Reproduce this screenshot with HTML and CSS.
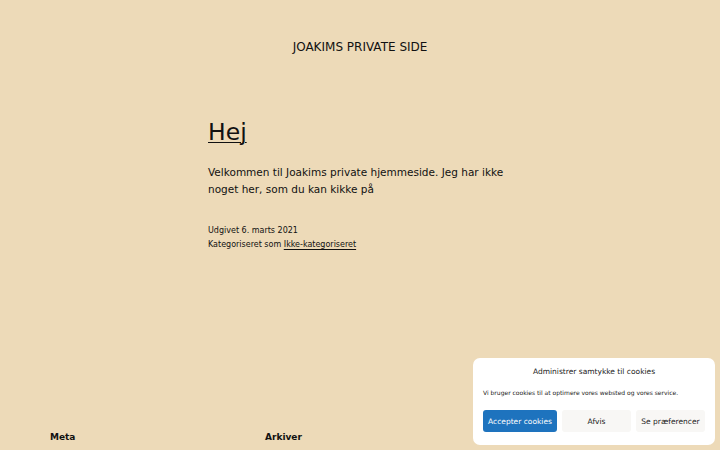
FILE: index.html
```html
<!DOCTYPE html>
<html lang="da">
<head>
<meta charset="utf-8">
<title>Joakims private side</title>
<link rel="stylesheet" href="styles.css">
</head>
<body>
<header class="site-header">
  <p class="site-title">JOAKIMS PRIVATE SIDE</p>
</header>
<main class="content">
  <article class="post">
    <h1 class="entry-title"><a href="#">Hej</a></h1>
    <p class="entry-text">Velkommen til Joakims private hjemmeside. Jeg har ikke noget her, som du kan kikke på</p>
    <footer class="entry-meta">
      <div>Udgivet 6. marts 2021</div>
      <div>Kategoriseret som <a href="#">Ikke-kategoriseret</a></div>
    </footer>
  </article>
</main>
<section class="widgets">
  <div class="widget"><h2>Meta</h2></div>
  <div class="widget"><h2>Arkiver</h2></div>
</section>
<div class="cookie-banner">
  <div class="cookie-title">Administrer samtykke til cookies</div>
  <div class="cookie-text">Vi bruger cookies til at optimere vores websted og vores service.</div>
  <div class="cookie-buttons">
    <button class="btn btn-accept">Accepter cookies</button>
    <button class="btn btn-plain">Afvis</button>
    <button class="btn btn-plain">Se præferencer</button>
  </div>
</div>
</body>
</html>
```
FILE: styles.css
```css
html, body {
  margin: 0;
  padding: 0;
}
body {
  background: #eddab8;
  color: #28303d;
  font-family: "DejaVu Sans", sans-serif;
  height: 450px;
  overflow: hidden;
  position: relative;
}
a {
  color: inherit;
}
.site-header {
  padding-top: 38px;
  text-align: center;
}
.site-title {
  margin: 0;
  font-size: 12px;
  line-height: 18px;
  color: #111;
}
.content {
  width: 304px;
  margin: 0 auto;
  padding-top: 60px;
}
.entry-title {
  margin: 0;
  font-size: 23.5px;
  font-weight: 400;
  line-height: 32px;
  color: #111;
}
.entry-title a {
  text-decoration-thickness: 1px;
  text-underline-offset: 2px;
}
.entry-text {
  margin: 16px 0 0;
  font-size: 10.5px;
  line-height: 17px;
  color: #111;
}
.entry-meta {
  margin-top: 26px;
  font-size: 8px;
  line-height: 14px;
  color: #111;
}
.entry-meta a {
  text-underline-offset: 2px;
}
.widgets {
  display: flex;
  padding: 0 50px;
  margin-top: 180px;
}
.widget {
  width: 215px;
}
.widget h2 {
  margin: 0;
  font-size: 9px;
  font-weight: 700;
  color: #111;
}
.cookie-banner {
  position: absolute;
  left: 473px;
  top: 358px;
  width: 242px;
  height: 87px;
  box-sizing: border-box;
  background: #fff;
  border-radius: 7px;
  padding: 8px 10px;
  color: #222;
}
.cookie-title {
  text-align: center;
  font-size: 7.5px;
  line-height: 12px;
}
.cookie-text {
  margin-top: 10px;
  font-size: 6px;
  line-height: 10px;
}
.cookie-buttons {
  display: flex;
  gap: 5px;
  margin-top: 12px;
}
.btn {
  font-family: "DejaVu Sans", sans-serif;
  border: 0;
  border-radius: 3px;
  height: 22px;
  font-size: 7.5px;
  padding: 0;
  flex: 1;
}
.btn-accept {
  background: #1e73be;
  color: #fff;
  flex: 0 0 74px;
}
.btn-plain {
  background: #f8f7f5;
  color: #222;
}
```
